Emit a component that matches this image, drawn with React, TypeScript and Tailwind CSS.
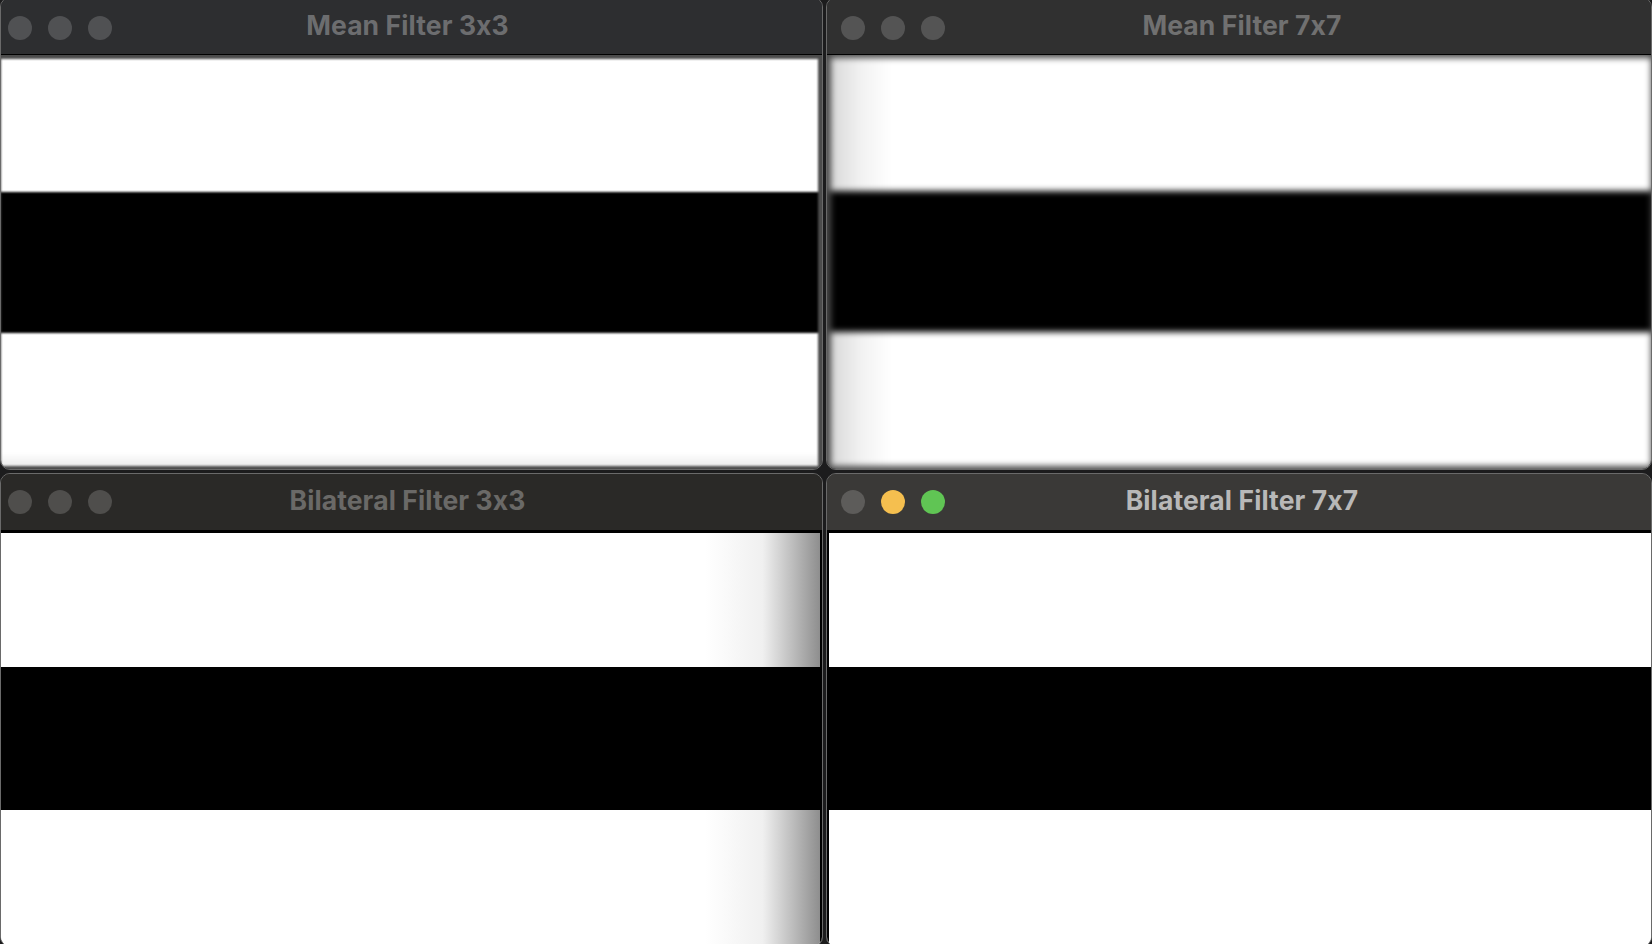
import React from "react";

type Lights = "inactive" | "active";

function TitleBar({
  title,
  h,
  bg,
  textColor,
  dot,
  lights,
  padL,
}: {
  title: string;
  h: string;
  bg: string;
  textColor: string;
  dot: string;
  lights: Lights;
  padL: string;
}) {
  return (
    <div className={`relative flex items-center justify-center border-b border-black ${h} ${bg}`}>
      <div className={`absolute top-0 bottom-0 left-0 flex items-center gap-[16px] ${padL}`}>
        <span className={`h-[24px] w-[24px] rounded-full ${dot}`} />
        <span className={`h-[24px] w-[24px] rounded-full ${lights === "active" ? "bg-[#f5bf4f]" : dot}`} />
        <span className={`h-[24px] w-[24px] rounded-full ${lights === "active" ? "bg-[#60c554]" : dot}`} />
      </div>
      <span
        className={`-mt-[4px] text-[26.5px] font-bold tracking-[0.1px] leading-none ${textColor}`}
        style={{ fontFamily: "Inter, 'Open Sans', sans-serif" }}
      >
        {title}
      </span>
    </div>
  );
}

export default function App() {
  return (
    <div className="h-[944px] w-[1652px] overflow-hidden bg-[#1c1c1d]">
      <div className="-mt-[3px] grid grid-cols-[823px_826px] grid-rows-[473px_474px] gap-[3px]">
        {/* Top-left: Mean Filter 3x3 */}
        <div className="flex flex-col overflow-hidden rounded-[10px] border border-[#6a6a6a] bg-[#2d2e30]">
          <TitleBar
            title="Mean Filter 3x3"
            h="h-[57px] pt-[3px] pr-[8px]"
            bg="bg-[#2d2e30]"
            textColor="text-[#6c6d6f]"
            dot="bg-[#505153]"
            lights="inactive"
            padL="pl-[7px] pt-[3px]"
          />
          <div className="flex flex-1 flex-col overflow-hidden bg-[#4c4c4c] pt-[4px] pr-[4px] pb-[3px]">
            <div className="flex flex-1 flex-col blur-[1.2px]">
              <div className="h-[133px] bg-white" />
              <div className="h-[141px] bg-black" />
              <div className="flex-1 bg-[linear-gradient(to_bottom,#fff_90%,#ececec)]" />
            </div>
          </div>
        </div>

        {/* Top-right: Mean Filter 7x7 */}
        <div className="flex flex-col overflow-hidden rounded-[10px] border border-[#6a6a6a] bg-[#303030]">
          <TitleBar
            title="Mean Filter 7x7"
            h="h-[57px] pt-[3px] pl-[6px]"
            bg="bg-[#303030]"
            textColor="text-[#707070]"
            dot="bg-[#545454]"
            lights="inactive"
            padL="pl-[14px] pt-[3px]"
          />
          <div className="flex flex-1 flex-col overflow-hidden bg-[#4a4a4a] pl-[4px] pt-[3px] pb-[3px]">
            <div className="flex flex-1 flex-col blur-[3px]">
              <div className="h-[133px] bg-[linear-gradient(to_right,#d8d8d8,#f2f2f2_30px,#fff_60px)]" />
              <div className="h-[141px] bg-black" />
              <div className="flex-1 bg-[linear-gradient(to_right,#d8d8d8,#f2f2f2_30px,#fff_60px)]" />
            </div>
          </div>
        </div>

        {/* Bottom-left: Bilateral Filter 3x3 */}
        <div className="flex flex-col overflow-hidden rounded-[10px] border border-[#6a6a6a] bg-[#2a2927]">
          <TitleBar
            title="Bilateral Filter 3x3"
            h="h-[57px] pr-[8px]"
            bg="bg-[#2a2927]"
            textColor="text-[#6a6967]"
            dot="bg-[#4f4e4c]"
            lights="inactive"
            padL="pl-[7px]"
          />
          <div className="flex flex-1 flex-col overflow-hidden border-[2px] border-l-0 border-black bg-white">
            <div className="h-[134px] bg-[linear-gradient(to_right,#fff_86%,#f0f0f0_93%,#8e8e8e)]" />
            <div className="h-[143px] bg-black" />
            <div className="flex-1 bg-[linear-gradient(to_right,#fff_86%,#f0f0f0_93%,#8e8e8e)]" />
          </div>
        </div>

        {/* Bottom-right: Bilateral Filter 7x7 */}
        <div className="flex flex-col overflow-hidden rounded-[10px] border border-[#6a6a6a] bg-[#3a3937]">
          <TitleBar
            title="Bilateral Filter 7x7"
            h="h-[57px] pl-[6px]"
            bg="bg-[#3a3937]"
            textColor="text-[#b8b8b8]"
            dot="bg-[#5d5c5a]"
            lights="active"
            padL="pl-[14px]"
          />
          <div className="flex flex-1 flex-col overflow-hidden border-[2px] border-r-0 border-black bg-white">
            <div className="h-[134px] bg-white" />
            <div className="h-[143px] bg-black" />
            <div className="flex-1 bg-white" />
          </div>
        </div>
      </div>
    </div>
  );
}
